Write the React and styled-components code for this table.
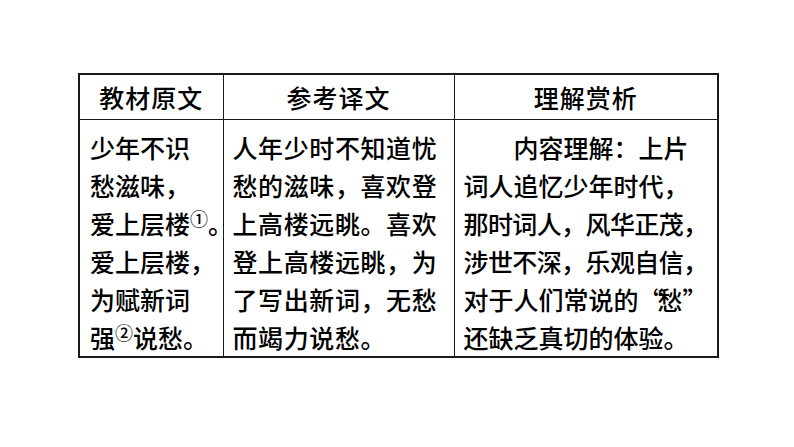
import React from 'react';
import styled, { createGlobalStyle } from 'styled-components';

const GlobalStyle = createGlobalStyle`
  html, body {
    margin: 0;
    padding: 0;
    background: #ffffff;
  }
  body {
    font-family: "Noto Sans CJK SC", "Noto Sans", sans-serif;
    color: #000000;
  }
`;

const Page = styled.div`
  width: 794px;
  height: 447px;
  padding: 73px 0 0 78px;
  box-sizing: border-box;
`;

const Table = styled.table`
  border-collapse: collapse;
  border: 2px solid #1a1a1a;
  table-layout: fixed;
  width: 639px;
  font-size: 25px;
  font-weight: 500;
`;

const HeadCell = styled.th`
  height: 44px;
  padding: 0;
  border: 1.5px solid #1a1a1a;
  font-weight: 500;
  text-align: center;
  vertical-align: middle;
  line-height: 44px;
  letter-spacing: 1px;
`;

const Cell = styled.td`
  height: 234px;
  padding: 8px 0 0 ${props => props.$pad || 9}px;
  box-sizing: border-box;
  border: 1.5px solid #1a1a1a;
  vertical-align: top;
  line-height: 38px;
`;

const Line = styled.div`
  white-space: nowrap;
  text-indent: ${props => (props.$indent ? '2em' : '0')};
  letter-spacing: ${props => props.$tight || 0}px;
`;

const Sup = styled.span`
  font-size: 18px;
  vertical-align: 0.42em;
  line-height: 0;
`;

const Quote = styled.span`
  letter-spacing: -6px;
`;

const original = [
  '少年不识',
  '愁滋味，',
  <>爱上层楼<Sup>①</Sup>。</>,
  '爱上层楼，',
  '为赋新词',
  <>强<Sup>②</Sup>说愁。</>,
];

const translation = [
  '人年少时不知道忧',
  '愁的滋味，喜欢登',
  '上高楼远眺。喜欢',
  '登上高楼远眺，为',
  '了写出新词，无愁',
  '而竭力说愁。',
];

const analysis = [
  '内容理解：上片',
  '词人追忆少年时代，',
  '那时词人，风华正茂，',
  '涉世不深，乐观自信，',
  <>对于人们常说的<Quote>“</Quote>愁”</>,
  '还缺乏真切的体验。',
];

export default function App() {
  return (
    <Page>
      <GlobalStyle />
      <Table>
        <colgroup>
          <col style={{ width: 144 }} />
          <col style={{ width: 231 }} />
          <col style={{ width: 264 }} />
        </colgroup>
        <thead>
          <tr>
            <HeadCell>教材原文</HeadCell>
            <HeadCell>参考译文</HeadCell>
            <HeadCell>理解赏析</HeadCell>
          </tr>
        </thead>
        <tbody>
          <tr>
            <Cell $pad={10}>
              {original.map((l, i) => (
                <Line key={i}>{l}</Line>
              ))}
            </Cell>
            <Cell>
              {translation.map((l, i) => (
                <Line key={i} $tight={0.6}>{l}</Line>
              ))}
            </Cell>
            <Cell>
              {analysis.map((l, i) => (
                <Line key={i} $indent={i === 0} $tight={i >= 2 && i <= 3 ? -0.6 : 0}>
                  {l}
                </Line>
              ))}
            </Cell>
          </tr>
        </tbody>
      </Table>
    </Page>
  );
}
